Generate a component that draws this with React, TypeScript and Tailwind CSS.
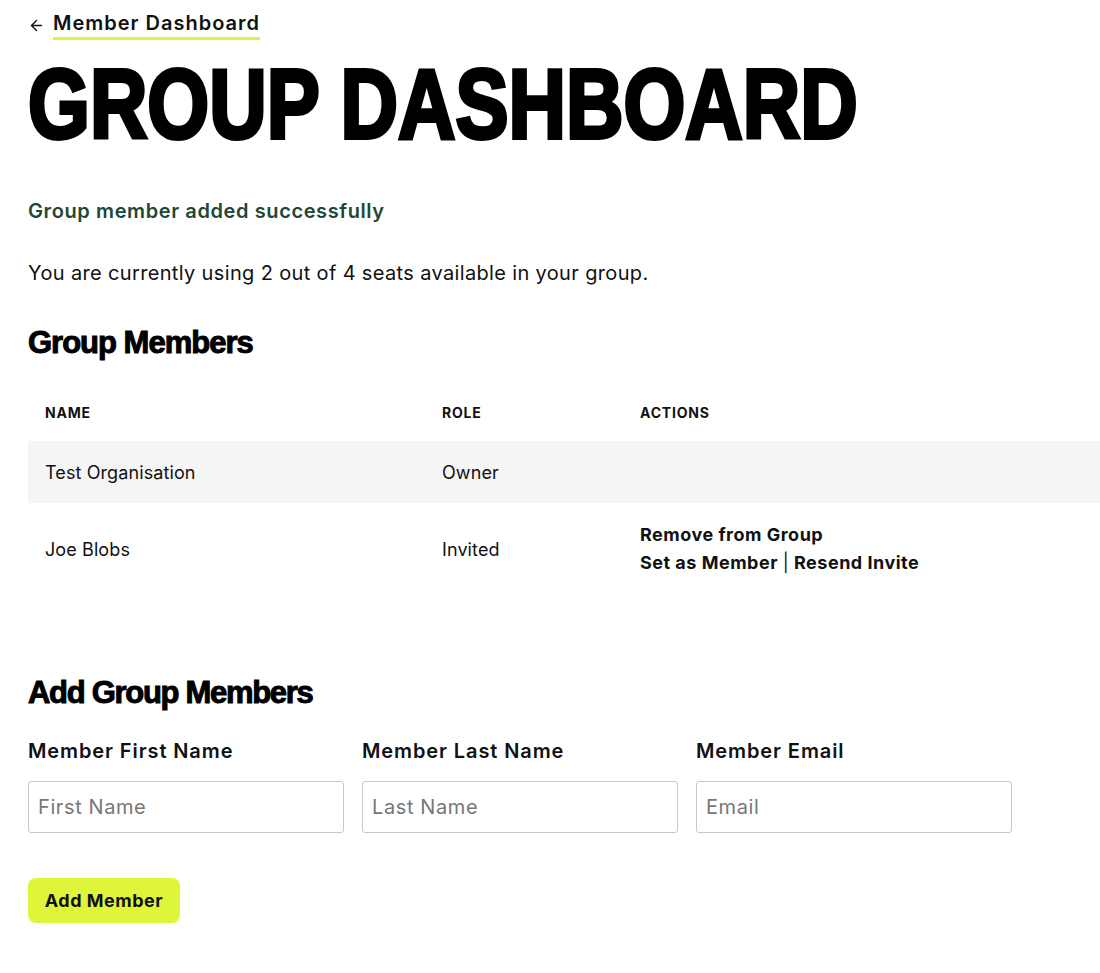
import { ArrowLeft } from 'lucide-react';

export default function App() {
  const members = [
    { name: 'Test Organisation', role: 'Owner', actions: false },
    { name: 'Joe Blobs', role: 'Invited', actions: true },
  ];

  const fields = [
    { label: 'Member First Name', placeholder: 'First Name' },
    { label: 'Member Last Name', placeholder: 'Last Name' },
    { label: 'Member Email', placeholder: 'Email' },
  ];

  return (
    <div className="min-h-screen bg-white text-[#111] pl-[28px] font-['Inter',sans-serif]">
      {/* Back link */}
      <div className="pt-[10px] flex items-center gap-[8px]">
        <ArrowLeft className="w-[17px] h-[17px] text-[#111]" strokeWidth={2} />
        <a className="text-[20px] font-semibold leading-[26px] tracking-[1px] border-b-[3px] border-[#dcf53a] pb-[1px]">Member Dashboard</a>
      </div>

      {/* Title */}
      <h1 className="mt-[15px] inline-block origin-left scale-x-[0.812] font-['Liberation_Sans',sans-serif] text-[98px] font-bold leading-[1] whitespace-nowrap text-black [-webkit-text-stroke:4px_#000]">
        GROUP DASHBOARD
      </h1>

      <p className="mt-[43px] text-[20px] font-semibold text-[#1f4735] tracking-[0.6px]">Group member added successfully</p>

      <p className="mt-[32px] text-[20px] text-[#111] tracking-[0.35px]">You are currently using 2 out of 4 seats available in your group.</p>

      {/* Members table */}
      <h2 className="mt-[39px] font-['Liberation_Sans',sans-serif] text-[31px] font-bold leading-[1] tracking-[-1px] text-black [-webkit-text-stroke:1px_#000]">Group Members</h2>

      <div className="mt-[34px]">
        <div className="grid grid-cols-[397px_198px_1fr] h-[49px] pt-[12px] text-[14px] font-bold uppercase leading-[17px] tracking-[0.8px] px-[17px]">
          <div>Name</div>
          <div>Role</div>
          <div>Actions</div>
        </div>
        {members.map((m, i) => (
          <div
            key={i}
            className={`grid grid-cols-[397px_198px_1fr] items-center text-[18px] tracking-[0.1px] px-[17px] ${i % 2 === 0 ? 'bg-[#f5f5f5] h-[62px]' : 'bg-white h-[92px]'}`}
          >
            <div>{m.name}</div>
            <div>{m.role}</div>
            <div className="font-bold leading-[28px] tracking-[0.5px]">
              {m.actions && (
                <>
                  <div>Remove from Group</div>
                  <div>Set as Member <span className="font-normal">|</span> Resend Invite</div>
                </>
              )}
            </div>
          </div>
        ))}
      </div>

      {/* Add members form */}
      <h2 className="mt-[82px] font-['Liberation_Sans',sans-serif] text-[31px] font-bold leading-[1] tracking-[-1.3px] text-black [-webkit-text-stroke:1px_#000]">Add Group Members</h2>

      <div className="mt-[30px] flex gap-[18px]">
        {fields.map((f) => (
          <div key={f.label} className="flex flex-col">
            <label className="text-[20px] font-semibold leading-[26px] tracking-[0.9px]">{f.label}</label>
            <input
              placeholder={f.placeholder}
              className="mt-[17px] w-[316px] h-[52px] border border-[#c8c8c8] rounded-[3px] px-[9px] text-[20px] tracking-[0.6px] placeholder:text-[#777] outline-none"
            />
          </div>
        ))}
      </div>

      <button className="mt-[45px] w-[152px] h-[45px] rounded-[8px] bg-[#dff53a] text-[18px] font-bold tracking-[0.5px] text-[#111]">
        Add Member
      </button>
    </div>
  );
}
